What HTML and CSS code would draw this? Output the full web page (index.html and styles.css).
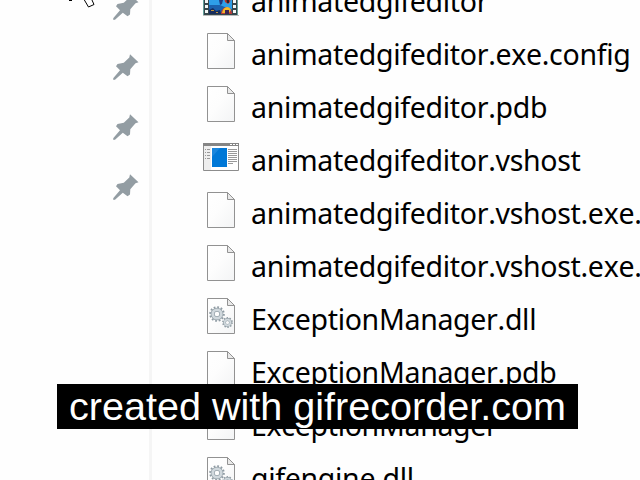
FILE: index.html
```html
<!DOCTYPE html>
<html lang="en">
<head>
<meta charset="utf-8">
<title>Files</title>
<link rel="stylesheet" href="styles.css">
</head>
<body>
<svg class="defs" aria-hidden="true">
  <defs>
    <linearGradient id="paper" x1="0" y1="0" x2="1" y2="1">
      <stop offset="0" stop-color="#fff"/><stop offset=".45" stop-color="#fdfdfd"/><stop offset="1" stop-color="#f3f4f5"/>
    </linearGradient>
    <symbol id="file" viewBox="0 0 28 36">
      <path d="M.5.5h20l7 7v28H.5z" fill="url(#paper)" stroke="#929292"/>
      <path d="M20.500.5v7h7z" fill="#e9e9e9" stroke="#929292"/>
    </symbol>
    <symbol id="pin" viewBox="0 0 26 26">
      <path d="M17 .3 25.500 8.300 22.500 9.300 17.300 15.300 17 20.500 14.500 22.300 9.800 18.700 2 25.700 .4 25.900 .2 24.200 7 16.200 3 12.200 4.500 9.900 10.800 8.800 16.300 3.500z" fill="#939da3"/>
    </symbol>
    <symbol id="dll" viewBox="0 0 28 36">
      <use href="#file" width="28" height="36"/>
      <g fill="none">
        <circle cx="10" cy="16" r="6.700" stroke="#8f9ba3" stroke-width="2.200" stroke-dasharray="1.750 1.758"/>
        <circle cx="10" cy="16" r="4.300" stroke="#98a4ab" stroke-width="4"/>
        <circle cx="10" cy="16" r="4.300" stroke="#d0d8dd" stroke-width="2.600"/>
        <circle cx="20.500" cy="24.500" r="4.600" stroke="#8f9ba3" stroke-width="1.600" stroke-dasharray="1.440 1.450"/>
        <circle cx="20.500" cy="24.500" r="3" stroke="#98a4ab" stroke-width="2.800"/>
        <circle cx="20.500" cy="24.500" r="2.900" stroke="#d0d8dd" stroke-width="1.600"/>
      </g>
    </symbol>
    <symbol id="app" viewBox="0 0 36 28">
      <path d="M.5.5h35v27H.5z" fill="#fff" stroke="#8c8c8c"/>
      <path d="M1 3h7v24H1z" fill="#eee"/>
      <path d="M0 0h36v3H0z" fill="#858585"/>
      <path d="M27 1h2v1h-2zM30 1h2v1h-2zM33 1h2v1h-2z" fill="#fff"/>
      <path d="M9 5h15v19H9z" fill="#0078d7"/>
      <path d="M9 5h8L9 14z" fill="#1a86dd"/>
      <path d="M25 6.500h9M25 8.500h9M25 10.500h9M25 12.500h9M25 14.500h9M25 16.500h9M25 18.500h9M25 20.500h5M4 6.500h3M4 9.500h3M4 12.500h3M4 15.500h3M2 6.500h1M2 9.500h1M2 12.500h1M2 15.500h1" stroke="#999"/>
    </symbol>
    <symbol id="film" viewBox="0 0 36 36">
      <path d="M0 0h35v35H0z" fill="#35464b"/>
      <path d="M0 0h1v35H0zM34 0h1v35h-1z" fill="#65a09b"/>
      <path d="M6 0h23v34H6z" fill="#2e9fe8"/>
      <path d="M6 25h11l7 3 5 1v5H6z" fill="#1b61ad"/>
      <path d="M16 20h4l-1 4-2 1z" fill="#1f3b82"/>
      <path d="M21 17h7l-1 5-2 2-3-2z" fill="#bb352b"/>
      <path d="M23 17h3v6h-2z" fill="#2b2330"/>
      <path d="M6 30l4-2 3 3 4-1 1 4H6z" fill="#172c5c"/>
      <path d="M8 30h3v1H8zM13 32h2v1h-2z" fill="#c7963a"/>
      <path d="M18 34c0-9 11-9 11 0z" fill="#b83a35"/>
      <path d="M19 33c1-7 7-8 9-3l-2 3z" fill="#f3b82c"/>
      <path d="M22 34v-4h4v4z" fill="#3d2554"/>
      <path d="M3.500 0v35M31.500 0v35" stroke="#f4f7f6" stroke-width="3" stroke-dasharray="3 2"/>
      <path d="M0 35.500h36" stroke="#bbb"/>
    </symbol>
  </defs>
</svg>
<div class="window">
  <aside class="sidebar">
    <svg class="pin"><use href="#pin"/></svg>
    <svg class="pin"><use href="#pin"/></svg>
    <svg class="pin"><use href="#pin"/></svg>
    <svg class="pin"><use href="#pin"/></svg>
  </aside>
  <main class="files">
    <div class="row"><svg class="icon film"><use href="#film"/></svg><span class="name">animatedgifeditor</span></div>
    <div class="row"><svg class="icon"><use href="#file"/></svg><span class="name">animatedgifeditor.exe.config</span></div>
    <div class="row"><svg class="icon"><use href="#file"/></svg><span class="name">animatedgifeditor.pdb</span></div>
    <div class="row"><svg class="icon app"><use href="#app"/></svg><span class="name">animatedgifeditor.vshost</span></div>
    <div class="row"><svg class="icon"><use href="#file"/></svg><span class="name">animatedgifeditor.vshost.exe.</span></div>
    <div class="row"><svg class="icon"><use href="#file"/></svg><span class="name">animatedgifeditor.vshost.exe.</span></div>
    <div class="row"><svg class="icon"><use href="#dll"/></svg><span class="name">ExceptionManager.dll</span></div>
    <div class="row"><svg class="icon"><use href="#file"/></svg><span class="name">ExceptionManager.pdb</span></div>
    <div class="row"><svg class="icon"><use href="#file"/></svg><span class="name">ExceptionManager</span></div>
    <div class="row"><svg class="icon"><use href="#dll"/></svg><span class="name">gifengine.dll</span></div>
  </main>
</div>
<svg class="cursor" viewBox="0 0 40 10"><path d="M9 0h3v1H9z" fill="#000"/><path d="M23.500 -1.500 28.500 7 34 4.500 31.500 -1" fill="#fff" stroke="#000"/></svg>
<div class="caption">created with gifrecorder.com</div>
</body>
</html>
```
FILE: styles.css
```css
body {
  margin: 0;
  width: 640px;
  height: 480px;
  overflow: hidden;
  position: relative;
  background: #fefefe;
  color: #000;
}
.defs { position: absolute; width: 0; height: 0; }
.window { display: flex; height: 480px; overflow: hidden; }
.sidebar {
  box-sizing: border-box;
  width: 152px;
  flex: none;
  display: flex;
  flex-direction: column;
  align-items: flex-end;
  gap: 34px;
  padding-right: 10px;
  border-right: 3px solid #f5f5f5;
}
.pin { width: 26px; height: 26px; flex: none; }
.pin:first-child { margin-top: -6px; }
.files { flex: none; width: 488px; margin-top: -28px; }
.row { display: flex; align-items: center; height: 53px; }
.icon { width: 28px; height: 36px; flex: none; margin: 0 16px 1px 55px; }
.icon.app { width: 36px; height: 28px; margin: 0 12px 1px 51px; }
.icon.film { width: 36px; height: 36px; margin: 0 12px 1px 51px; }
.name {
  font: 28.5px/53px "Noto Sans", sans-serif;
  padding-top: 5px;
  letter-spacing: -0.31px;
  white-space: nowrap;
  font-kerning: none;
  font-variant-ligatures: none;
}
.caption {
  position: absolute;
  left: 57px;
  top: 384px;
  width: 521px;
  height: 45px;
  background: #000;
  color: #fff;
  font: 39.6px/44px "Liberation Sans", Arial, sans-serif;
  text-align: center;
  white-space: nowrap;
}
.cursor { position: absolute; left: 60px; top: 0; width: 40px; height: 10px; }
```
